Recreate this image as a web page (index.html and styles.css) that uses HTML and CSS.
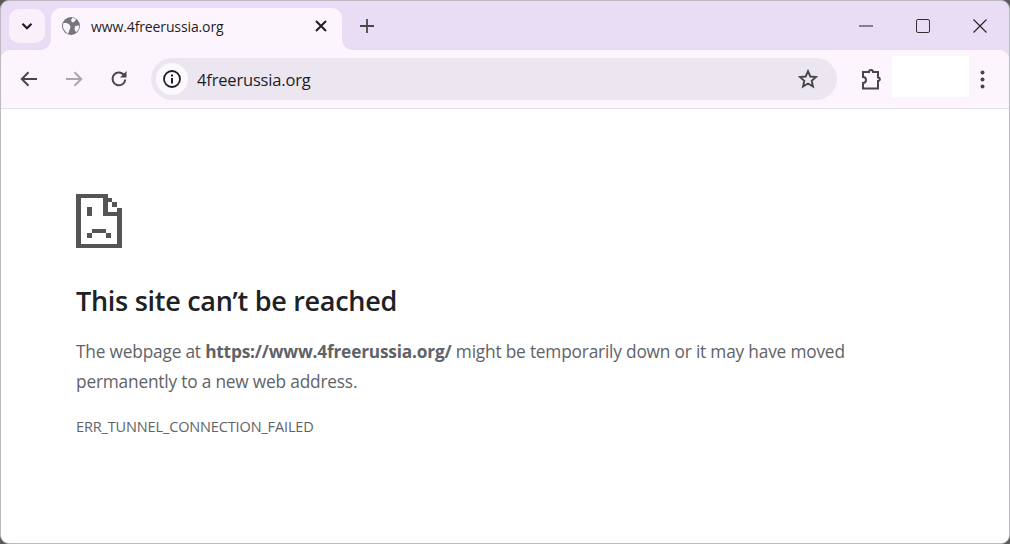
FILE: index.html
```html
<!DOCTYPE html>
<html>
  <head>
    <title>www.4freerussia.org</title>
    <link rel="stylesheet" href="styles.css">
  </head>
  <body>
    <div class="window">
      <!-- tab strip -->
      <div class="tab_strip">
        <button class="tab_search">
          <svg width="16" height="16" viewBox="0 0 16 16"><path d="M3.5 5.8 8 10.2l4.5-4.4" fill="none" stroke="#1f1f1f" stroke-width="2.2"/></svg>
        </button>
        <div class="tab">
          <svg class="favicon" width="18" height="18" viewBox="0 0 18 18">
            <circle cx="9" cy="9" r="9" fill="#77777a"/>
            <path d="M1 6.500c2.500-.8 5-.3 6.500 1.200 1.200 1.300 1.200 3 .3 4.500L6 17 3 14 1.200 11ZM10.500 .8l3.500 1.200-1.500 2.800-2.500.8-1-2.500ZM17.200 8.500l-4 .6-.7 3 1.500 3.500 2.700-3.500Z" fill="#fdf5fe"/>
          </svg>
          <span class="tab_title">www.4freerussia.org</span>
          <svg class="tab_close" width="12" height="12" viewBox="0 0 12 12"><path d="M1 1l10 10M11 1 1 11" stroke="#1f1f1f" stroke-width="2"/></svg>
        </div>
        <svg class="new_tab" width="14" height="14" viewBox="0 0 14 14"><path d="M7 0v14M0 7h14" stroke="#474747" stroke-width="1.800"/></svg>
        <div class="window_controls">
          <svg width="14" height="14" viewBox="0 0 14 14"><path d="M0 7h14" stroke="#222" stroke-width="1.200"/></svg>
          <svg width="14" height="14" viewBox="0 0 14 14"><rect x=".5" y=".5" width="13" height="13" rx="1.500" fill="none" stroke="#333"/></svg>
          <svg width="14" height="14" viewBox="0 0 14 14"><path d="M.5.5l13 13M13.500.5l-13 13" stroke="#222" stroke-width="1.100"/></svg>
        </div>
      </div>
      <!-- toolbar -->
      <div class="toolbar">
        <svg class="nav_icon" width="18" height="16" viewBox="0 0 18 16"><path d="M17 8H2M8.500 1.300 1.800 8l6.700 6.700" fill="none" stroke="#474747" stroke-width="2"/></svg>
        <svg class="nav_icon" width="18" height="16" viewBox="0 0 18 16"><path d="M1 8h15M9.500 1.300 16.200 8l-6.700 6.700" fill="none" stroke="#a9a6ac" stroke-width="2"/></svg>
        <svg class="nav_icon" width="18" height="18" viewBox="0 0 18 18"><path d="M15.300 9.500A6.400 6.400 0 1 1 13.400 4.300L15.500 6.300" fill="none" stroke="#474747" stroke-width="2"/><path d="M16.500 1v6.500H10Z" fill="#474747"/></svg>
        <div class="omnibox">
          <div class="info_chip">
            <svg width="18" height="18" viewBox="0 0 18 18"><circle cx="9" cy="9" r="8" fill="none" stroke="#1f1f1f" stroke-width="1.800"/><path d="M8 8h2v5.500H8ZM8 4.500h2v2H8Z" fill="#1f1f1f"/></svg>
          </div>
          <span class="url">4freerussia.org</span>
          <svg class="star" width="20" height="20" viewBox="0 0 20 20"><path d="M10 2.200l2.300 5.300 5.800.5-4.400 3.800 1.300 5.700-5-3-5 3 1.300-5.700L1.900 8l5.800-.5Z" fill="none" stroke="#474747" stroke-width="1.900" stroke-linejoin="miter"/></svg>
        </div>
        <svg class="puzzle" width="22" height="22" viewBox="0 0 22 22"><path d="M3 4h6a2 2 0 0 1 4 0h5v5.500a1.800 1.800 0 0 1 0 3.600V20.500H3V15a3 3 0 0 0 0-6Z" fill="none" stroke="#474747" stroke-width="2"/></svg>
        <div class="profile_blank"></div>
        <svg class="menu_dots" width="5" height="19" viewBox="0 0 5 19"><circle cx="2.500" cy="2.500" r="2" fill="#474747"/><circle cx="2.500" cy="9.500" r="2" fill="#474747"/><circle cx="2.500" cy="16.500" r="2" fill="#474747"/></svg>
      </div>
      <!-- error page -->
      <main class="error_page">
        <svg class="sad_page" width="46" height="55" viewBox="0 0 46 55">
          <path d="M0 0h32v4H5v46h36V22H27V4h5v14h14v36H0Z" fill="#555"/>
          <path d="M32 4h4v4h-4ZM36 8h5v5h-5ZM41 14h5v4h-5Z" fill="#555"/>
          <path d="M11 13h5v9h-5ZM16 35h14v4H16ZM11 39h5v5h-5ZM30 39h5v5h-5Z" fill="#555"/>
        </svg>
        <h1 class="error_title">This site can&rsquo;t be reached</h1>
        <p class="error_text">The webpage at <strong>https://www.4freerussia.org/</strong> might be temporarily down or it may have moved permanently to a new web address.</p>
        <div class="error_code">ERR_TUNNEL_CONNECTION_FAILED</div>
      </main>
    </div>
  </body>
</html>
```
FILE: styles.css
```css
html, body {
  margin: 0;
  padding: 0;
  height: 100%;
  overflow: hidden;
  background-color: rgb(90, 90, 90);
}
.window {
  box-sizing: border-box;
  height: 544px;
  border: 1px solid rgb(188, 186, 192);
  border-radius: 9px;
  background-color: rgb(233, 220, 245);
  overflow: hidden;
  font-family: "Open Sans", "Noto Sans", sans-serif;
}

/* tab strip */
.tab_strip {
  display: flex;
  align-items: flex-end;
  height: 49px;
  padding-left: 8px;
}
.tab_search {
  width: 36px;
  height: 34px;
  margin-right: 6px;
  margin-bottom: 7px;
  padding: 0;
  border: none;
  border-radius: 10px;
  background-color: rgb(249, 240, 252);
  display: flex;
  align-items: center;
  justify-content: center;
}
.tab {
  position: relative;
  display: flex;
  align-items: center;
  box-sizing: border-box;
  width: 291px;
  height: 42px;
  padding: 0 15px 6px 11px;
  border-radius: 10px 10px 0 0;
  background-color: rgb(253, 245, 254);
}
.tab::before,
.tab::after {
  content: "";
  position: absolute;
  bottom: 0;
  width: 10px;
  height: 10px;
  background: radial-gradient(circle at 0 0, rgb(233, 220, 245) 9.500px, rgb(253, 245, 254) 10px);
}
.tab::before {
  left: -10px;
}
.tab::after {
  right: -10px;
  background: radial-gradient(circle at 100% 0, rgb(233, 220, 245) 9.500px, rgb(253, 245, 254) 10px);
}
.tab_title {
  flex: 1;
  margin-left: 11px;
  font-size: 14px;
  letter-spacing: -0.12px;
  color: rgb(31, 31, 31);
}
.new_tab {
  margin-left: 18px;
  margin-bottom: 17px;
}
.window_controls {
  margin-left: auto;
  margin-bottom: 17px;
  margin-right: 22px;
  display: flex;
  gap: 43px;
}

/* toolbar */
.toolbar {
  display: flex;
  align-items: center;
  box-sizing: border-box;
  height: 59px;
  padding-left: 19px;
  border-radius: 9px 9px 0 0;
  border-bottom: 1px solid rgb(228, 224, 232);
  background-color: rgb(253, 245, 254);
}
.nav_icon {
  margin-right: 27px;
}
.omnibox {
  display: flex;
  align-items: center;
  box-sizing: border-box;
  width: 686px;
  height: 42px;
  margin-left: -4px;
  padding-left: 5px;
  padding-right: 19px;
  border-radius: 21px;
  background-color: rgb(235, 230, 240);
}
.info_chip {
  display: flex;
  align-items: center;
  justify-content: center;
  width: 32px;
  height: 32px;
  border-radius: 50%;
  background-color: rgb(253, 247, 254);
}
.url {
  flex: 1;
  margin-left: 9px;
  font-size: 16.500px;
  letter-spacing: -0.17px;
  color: rgb(31, 31, 31);
}
.puzzle {
  margin-left: 23px;
}
.profile_blank {
  width: 77px;
  height: 41px;
  margin-left: 10px;
  margin-bottom: 5px;
  background-color: rgb(255, 255, 255);
}
.menu_dots {
  margin-left: 11px;
}

/* error page */
.error_page {
  height: 435px;
  box-sizing: border-box;
  padding: 85px 140px 0 75px;
  background-color: rgb(255, 255, 255);
}
.sad_page {
  display: block;
  margin-left: -0.5px;
}
.error_title {
  margin: 34px 0 0;
  font-size: 27px;
  line-height: 36px;
  font-weight: 600;
  letter-spacing: -0.28px;
  color: rgb(32, 33, 36);
}
.error_text {
  margin: 18px 0 0;
  font-size: 17.300px;
  line-height: 30px;
  letter-spacing: -0.19px;
  font-weight: 400;
  color: rgb(95, 99, 104);
}
.error_text strong {
  font-weight: 700;
}
.error_code {
  margin-top: 20px;
  font-size: 14.500px;
  line-height: 20px;
  letter-spacing: -0.14px;
  color: rgb(95, 99, 104);
}
```
